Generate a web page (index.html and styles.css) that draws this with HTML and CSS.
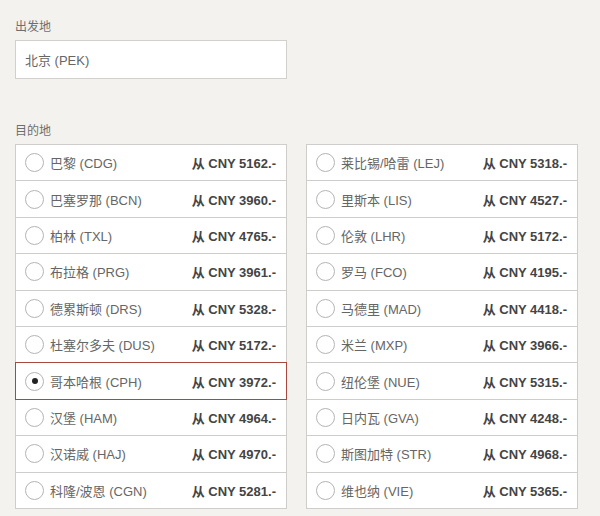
FILE: index.html
```html
<!DOCTYPE html>
<html lang="zh-CN">
<head>
    <meta charset="UTF-8">
    <meta name="viewport" content="width=device-width, initial-scale=1.0">
    <title>选择航线</title>
    <link rel="stylesheet" href="styles.css">
</head>
<body>
    <div class="booking">
        <div class="field">
            <label class="field-label" for="origin">出发地</label>
            <input class="field-input" id="origin" type="text" value="北京 (PEK)" readonly>
        </div>

        <div class="field dest">
            <div class="field-label">目的地</div>
            <div class="dest-grid">
                <ul class="dest-list" id="leftList"></ul>
                <ul class="dest-list" id="rightList"></ul>
            </div>
        </div>
    </div>

    <script>
        var leftCities = [
            ["巴黎 (CDG)", 5162], ["巴塞罗那 (BCN)", 3960], ["柏林 (TXL)", 4765],
            ["布拉格 (PRG)", 3961], ["德累斯顿 (DRS)", 5328], ["杜塞尔多夫 (DUS)", 5172],
            ["哥本哈根 (CPH)", 3972], ["汉堡 (HAM)", 4964], ["汉诺威 (HAJ)", 4970],
            ["科隆/波恩 (CGN)", 5281]
        ];
        var rightCities = [
            ["莱比锡/哈雷 (LEJ)", 5318], ["里斯本 (LIS)", 4527], ["伦敦 (LHR)", 5172],
            ["罗马 (FCO)", 4195], ["马德里 (MAD)", 4418], ["米兰 (MXP)", 3966],
            ["纽伦堡 (NUE)", 5315], ["日内瓦 (GVA)", 4248], ["斯图加特 (STR)", 4968],
            ["维也纳 (VIE)", 5365]
        ];
        var selected = "哥本哈根 (CPH)";

        function fillList(id, cities) {
            var list = document.getElementById(id);
            cities.forEach(function (c) {
                var li = document.createElement("li");
                li.className = "dest-item" + (c[0] === selected ? " is-selected" : "");
                li.innerHTML =
                    '<span class="radio"></span>' +
                    '<span class="city">' + c[0] + '</span>' +
                    '<span class="price">从 CNY ' + c[1] + '.-</span>';
                li.onclick = function () {
                    selected = c[0];
                    document.querySelectorAll(".dest-item").forEach(function (el) {
                        el.classList.remove("is-selected");
                    });
                    li.classList.add("is-selected");
                };
                list.appendChild(li);
            });
        }

        fillList("leftList", leftCities);
        fillList("rightList", rightCities);
    </script>
</body>
</html>
```

FILE: styles.css
```css
body {
    margin: 0;
    background: #f3f2ef;
    font-family: 'Liberation Sans', Arial, 'Noto Sans CJK SC', sans-serif;
    color: #666;
}

.booking {
    width: 563px;
    padding: 20px 15px 0 15px;
}

.field-label {
    display: block;
    font-size: 12px;
    line-height: 14px;
    color: #6e6e6e;
    margin-bottom: 6px;
}

.field-input {
    display: block;
    box-sizing: border-box;
    width: 272px;
    height: 39px;
    padding: 0 9px;
    border: 1px solid #d2d0cc;
    background: #fff;
    font-family: inherit;
    font-size: 13px;
    color: #666;
    outline: none;
}

.dest {
    margin-top: 45px;
}

.dest-grid {
    display: grid;
    grid-template-columns: 272px 272px;
    column-gap: 19px;
}

.dest-list {
    list-style: none;
    margin: 0;
    padding: 1px 0 0 0;
}

.dest-item {
    position: relative;
    box-sizing: border-box;
    height: 37.4px;
    margin-top: -1px;
    display: flex;
    align-items: center;
    padding: 0 10px 0 9px;
    background: #fff;
    border: 1px solid #cfcdc9;
    font-size: 13px;
    cursor: pointer;
}

.dest-item.is-selected {
    border-color: #a9483e;
    z-index: 1;
}

.radio {
    box-sizing: border-box;
    width: 19px;
    height: 19px;
    border: 1px solid #b4b4b4;
    border-radius: 50%;
    background: #fff;
    margin-right: 6px;
    display: flex;
    align-items: center;
    justify-content: center;
}

.is-selected .radio::after {
    content: "";
    width: 6px;
    height: 6px;
    border-radius: 50%;
    background: #222;
}

.city {
    flex: 1;
    color: #666;
}

.price {
    font-weight: bold;
    color: #444;
}
```
